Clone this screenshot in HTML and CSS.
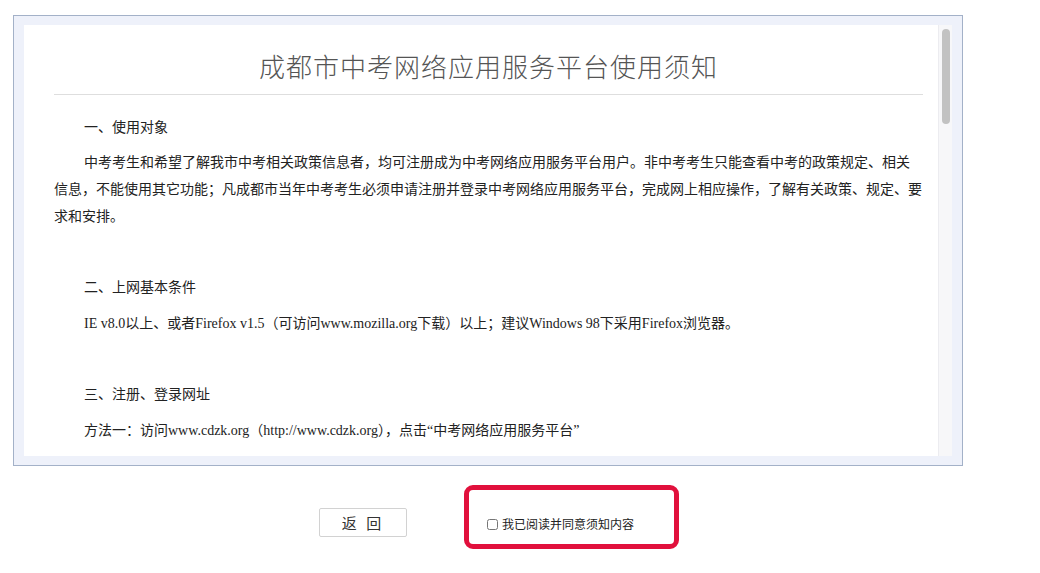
FILE: index.html
```html
<!DOCTYPE html>
<html lang="zh-CN">
<head>
    <meta charset="UTF-8">
    <meta name="viewport" content="width=device-width, initial-scale=1.0">
    <title>成都市中考网络应用服务平台使用须知</title>
    <link rel="stylesheet" href="styles.css">
</head>
<body>

    <div class="notice">
        <div class="notice-body">
            <div class="notice-text">
                <h1>成都市中考网络应用服务平台使用须知</h1>

                <h2 class="first">一、使用对象</h2>
                <p>中考考生和希望了解我市中考相关政策信息者，均可注册成为中考网络应用服务平台用户。非中考考生只能查看中考的政策规定、相关信息，不能使用其它功能；凡成都市当年中考考生必须申请注册并登录中考网络应用服务平台，完成网上相应操作，了解有关政策、规定、要求和安排。</p>

                <h2>二、上网基本条件</h2>
                <p>IE v8.0以上、或者Firefox v1.5（可访问www.mozilla.org下载）以上；建议Windows 98下采用Firefox浏览器。</p>

                <h2>三、注册、登录网址</h2>
                <p>方法一：访问www.cdzk.org（http://www.cdzk.org），点击“中考网络应用服务平台”</p>
            </div>
            <div class="scrollbar">
                <div class="thumb"></div>
            </div>
        </div>
    </div>

    <div class="actions">
        <button class="back">返 回</button>
        <label class="agree"><input type="checkbox" id="agree">我已阅读并同意须知内容</label>
    </div>

</body>
</html>
```

FILE: styles.css
```css
body {
    margin: 0;
    background: #fff;
    font-family: "Liberation Serif", "Noto Sans CJK SC", serif;
    color: #222;
}

.notice {
    width: 928px;
    margin: 15px 0 0 13px;
    padding: 9px 10px;
    border: 1px solid #a3b1c8;
    background: #eef1fa;
}

.notice-body {
    display: flex;
    height: 431px;
    overflow: hidden;
    background: #fff;
}

.notice-text {
    flex: 1;
    padding: 0 15px 0 30px;
}

h1 {
    margin: 0;
    padding: 23px 0 10px;
    border-bottom: 1px solid #dedede;
    font-family: "Noto Sans CJK SC", sans-serif;
    font-size: 26px;
    font-weight: 300;
    line-height: 36px;
    letter-spacing: 1px;
    text-align: center;
    color: #555;
}

h2 {
    margin: 43px 0 10px;
    font-family: "Noto Sans CJK SC", sans-serif;
    font-size: 14px;
    font-weight: normal;
    line-height: 27px;
    text-indent: 30px;
}

h2.first {
    margin: 18px 0 9px;
}

p {
    margin: 0;
    font-size: 14px;
    line-height: 27px;
    text-indent: 30px;
}

.scrollbar {
    width: 13px;
    border-left: 1px solid #ececf0;
    background: #f7f7f9;
}

.thumb {
    width: 8px;
    height: 95px;
    margin: 4px 0 0 3px;
    border-radius: 4px;
    background: #c2c2c2;
}

.actions {
    display: flex;
    align-items: flex-start;
    gap: 57px;
    margin: 19px 0 0 319px;
}

.back {
    width: 88px;
    height: 29px;
    margin-top: 23px;
    padding: 0;
    border: 1px solid #d2d2d2;
    border-radius: 2px;
    background: #fff;
    font-family: "Noto Sans CJK SC", sans-serif;
    font-size: 15px;
    letter-spacing: 3px;
    color: #333;
    cursor: pointer;
}

.agree {
    display: flex;
    align-items: center;
    box-sizing: border-box;
    width: 215px;
    height: 64px;
    padding: 13px 0 0 18px;
    border: 5px solid #e1103c;
    border-radius: 9px;
    font-family: "Noto Sans CJK SC", sans-serif;
    font-size: 12px;
    color: #222;
}

.agree input {
    width: 11px;
    height: 11px;
    margin: 1px 4px 0 0;
}
```
